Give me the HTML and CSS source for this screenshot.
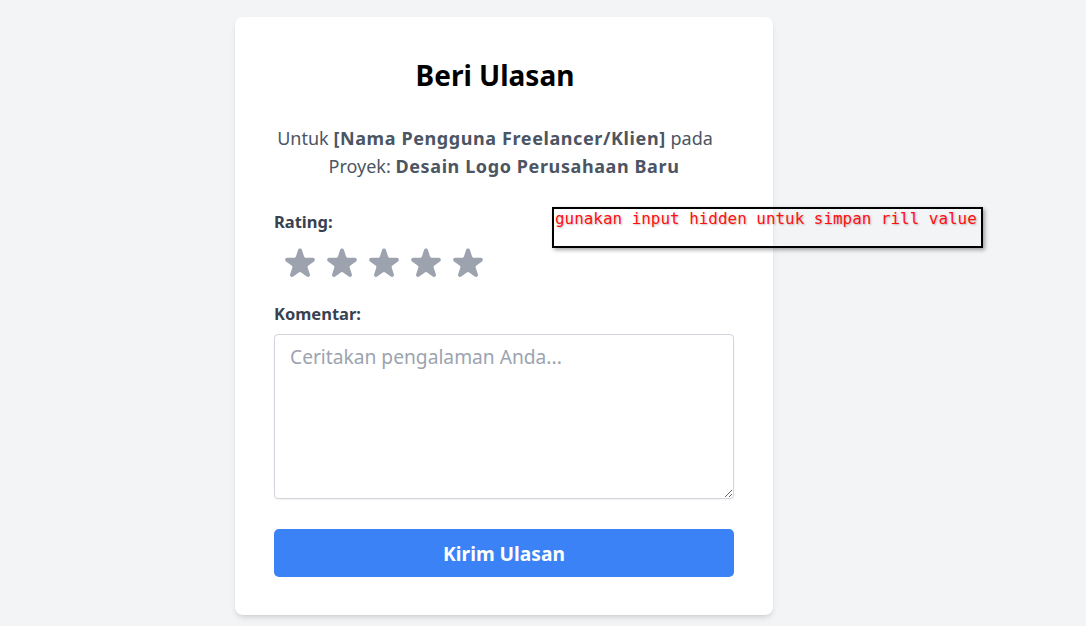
FILE: index.html
```html
<!DOCTYPE html>
<html lang="id">
<head>
<meta charset="utf-8">
<title>Beri Ulasan</title>
<link rel="stylesheet" href="styles.css">
</head>
<body>
<div class="page">
  <form class="card">
    <header class="head">
      <h1 class="title">Beri Ulasan</h1>
      <p class="subtitle">Untuk <strong>[Nama Pengguna Freelancer/Klien]</strong> pada<span class="trail"></span> Proyek: <strong>Desain Logo Perusahaan Baru</strong></p>
    </header>
    <label class="label">Rating:</label>
    <div class="stars">
      <svg class="star" viewBox="0 0 20 20"><path d="M9.049 2.927c.3-.921 1.603-.921 1.902 0l1.07 3.292a1 1 0 00.95.69h3.462c.969 0 1.371 1.24.588 1.81l-2.8 2.034a1 1 0 00-.364 1.118l1.07 3.292c.3.921-.755 1.688-1.540 1.118l-2.8-2.034a1 1 0 00-1.175 0l-2.8 2.034c-.784.57-1.838-.197-1.539-1.118l1.07-3.292a1 1 0 00-.364-1.118L2.98 8.72c-.783-.57-.38-1.81.588-1.81h3.461a1 1 0 00.951-.69l1.07-3.292z"/></svg>
      <svg class="star" viewBox="0 0 20 20"><path d="M9.049 2.927c.3-.921 1.603-.921 1.902 0l1.07 3.292a1 1 0 00.95.69h3.462c.969 0 1.371 1.24.588 1.81l-2.8 2.034a1 1 0 00-.364 1.118l1.07 3.292c.3.921-.755 1.688-1.54 1.118l-2.8-2.034a1 1 0 00-1.175 0l-2.8 2.034c-.784.57-1.838-.197-1.539-1.118l1.07-3.292a1 1 0 00-.364-1.118L2.98 8.72c-.783-.57-.38-1.81.588-1.81h3.461a1 1 0 00.951-.69l1.07-3.292z"/></svg>
      <svg class="star" viewBox="0 0 20 20"><path d="M9.049 2.927c.3-.921 1.603-.921 1.902 0l1.07 3.292a1 1 0 00.95.69h3.462c.969 0 1.371 1.24.588 1.81l-2.8 2.034a1 1 0 00-.364 1.118l1.07 3.292c.3.921-.755 1.688-1.54 1.118l-2.8-2.034a1 1 0 00-1.175 0l-2.8 2.034c-.784.57-1.838-.197-1.539-1.118l1.07-3.292a1 1 0 00-.364-1.118L2.98 8.72c-.783-.57-.38-1.81.588-1.81h3.461a1 1 0 00.951-.69l1.07-3.292z"/></svg>
      <svg class="star" viewBox="0 0 20 20"><path d="M9.049 2.927c.3-.921 1.603-.921 1.902 0l1.07 3.292a1 1 0 00.95.69h3.462c.969 0 1.371 1.24.588 1.81l-2.8 2.034a1 1 0 00-.364 1.118l1.07 3.292c.3.921-.755 1.688-1.54 1.118l-2.8-2.034a1 1 0 00-1.175 0l-2.8 2.034c-.784.57-1.838-.197-1.539-1.118l1.07-3.292a1 1 0 00-.364-1.118L2.98 8.72c-.783-.57-.38-1.81.588-1.81h3.461a1 1 0 00.951-.69l1.07-3.292z"/></svg>
      <svg class="star" viewBox="0 0 20 20"><path d="M9.049 2.927c.3-.921 1.603-.921 1.902 0l1.07 3.292a1 1 0 00.95.69h3.462c.969 0 1.371 1.24.588 1.81l-2.8 2.034a1 1 0 00-.364 1.118l1.07 3.292c.3.921-.755 1.688-1.54 1.118l-2.8-2.034a1 1 0 00-1.175 0l-2.8 2.034c-.784.57-1.838-.197-1.539-1.118l1.07-3.292a1 1 0 00-.364-1.118L2.98 8.72c-.783-.57-.38-1.81.588-1.81h3.461a1 1 0 00.951-.69l1.07-3.292z"/></svg>
    </div>
    <label class="label label-comment" for="komentar">Komentar:</label>
    <textarea id="komentar" class="comment" placeholder="Ceritakan pengalaman Anda..."></textarea>
    <button type="button" class="submit">Kirim Ulasan</button>
  </form>
  <div class="note">gunakan input hidden untuk simpan rill value</div>
</div>
</body>
</html>
```
FILE: styles.css
```css
* { box-sizing: border-box; }
html, body { margin: 0; padding: 0; }
body {
  background: #f3f4f6;
  font-family: "Noto Sans", "Open Sans", sans-serif;
  width: 1086px;
  height: 626px;
  overflow: hidden;
}
.page {
  position: relative;
  padding: 17px 0 0 235px;
  height: 626px;
}
.card {
  width: 538px;
  background: #fff;
  border-radius: 8px;
  box-shadow: 0 4px 6px -1px rgba(0,0,0,0.1), 0 2px 4px -2px rgba(0,0,0,0.1);
  padding: 40px 39px 38px 39px;
  display: flex;
  flex-direction: column;
}
.head {
  text-align: center;
}
.title {
  margin: 0;
  padding-right: 18px;
  font-size: 28px;
  line-height: 36px;
  font-weight: 700;
  color: #000;
}
.subtitle {
  margin: 31px 0 0;
  font-size: 18px;
  line-height: 28px;
  color: #4b5563;
}
.subtitle strong {
  font-weight: 700;
  letter-spacing: 0.6px;
}
.trail {
  display: inline-block;
  width: 18px;
}
.label {
  display: block;
  margin-top: 30px;
  font-size: 16.5px;
  line-height: 24px;
  font-weight: 700;
  color: #374151;
}
.stars {
  display: flex;
  gap: 2px;
  margin: 10px 0 0 6px;
}
.star {
  width: 40px;
  height: 40px;
  fill: #9ca3af;
}
.label-comment { margin-top: 18px; }
.comment {
  display: block;
  margin-top: 8px;
  width: 460px;
  height: 165px;
  padding: 8px 15px;
  border: 1px solid #d1d5db;
  border-radius: 4px;
  box-shadow: 0 1px 2px rgba(0,0,0,0.05);
  font-family: "Noto Sans", "Open Sans", sans-serif;
  font-size: 19.2px;
  line-height: 28px;
  color: #111827;
  resize: vertical;
}
.comment::placeholder { color: #9ca3af; }
.submit {
  margin-top: 30px;
  width: 460px;
  height: 48px;
  border: none;
  border-radius: 5px;
  background: #3b82f6;
  color: #fff;
  font-family: "Noto Sans", "Open Sans", sans-serif;
  font-size: 19.2px;
  font-weight: 700;
}
.note {
  position: absolute;
  left: 552px;
  top: 207px;
  width: 431px;
  height: 41px;
  padding: 1px;
  border: 2px solid #000;
  box-shadow: 2px 2px 4px rgba(0,0,0,0.35);
  font-family: "DejaVu Sans Mono", monospace;
  font-size: 15.93px;
  line-height: 18px;
  color: #ff1010;
  text-shadow: 1px 1px 2px rgba(0,0,0,0.25);
  white-space: nowrap;
}
```
